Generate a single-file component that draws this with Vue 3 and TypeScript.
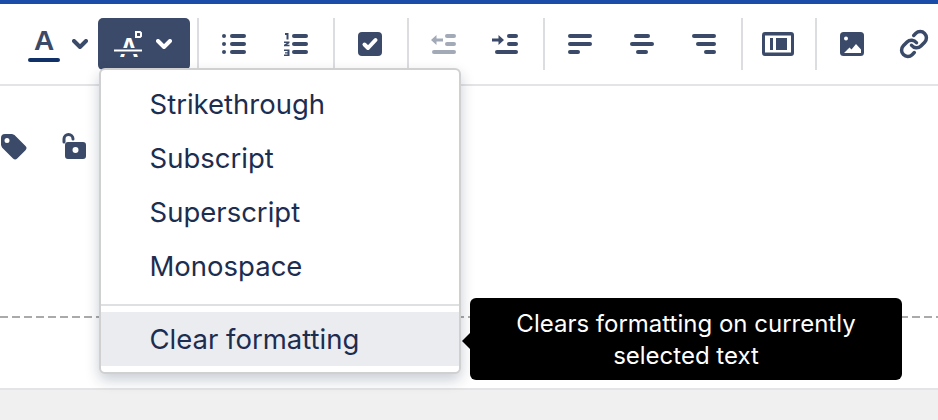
<script setup lang="ts">
const menuItems = ["Strikethrough", "Subscript", "Superscript", "Monospace"];
</script>

<template>
  <div class="page">
    <div class="top-bar" />
    <div class="toolbar">
      <button class="btn btn-color">
        <span class="letter-wrap">
          <span class="letter">A</span>
          <span class="letter-line" />
        </span>
        <svg class="chevron" width="16" height="10" viewBox="0 0 16 10">
          <path d="M2 2l6 6 6-6" />
        </svg>
      </button>
      <button class="btn btn-active">
        <svg class="more-icon" width="28" height="32" viewBox="0 0 28 32">
          <text x="15" y="29" text-anchor="middle" class="more-a">A</text>
          <rect x="0" y="20" width="28" height="6" class="more-band" />
          <rect x="0" y="21.500" width="28" height="2" class="more-line" />
          <path d="M22 4h4l1 1v3l-1 1h-4z" class="more-box" />
        </svg>
        <svg class="chevron" width="16" height="10" viewBox="0 0 16 10">
          <path d="M2 2l6 6 6-6" />
        </svg>
      </button>

      <span class="sep" />

      <button class="btn">
        <svg width="32" height="32" viewBox="0 0 32 32">
          <circle cx="6" cy="8" r="2" />
          <circle cx="6" cy="16" r="2" />
          <circle cx="6" cy="24" r="2" />
          <rect x="12" y="6" width="16" height="4" rx="2" />
          <rect x="12" y="14" width="16" height="4" rx="2" />
          <rect x="12" y="22" width="16" height="4" rx="2" />
        </svg>
      </button>
      <button class="btn">
        <svg width="32" height="32" viewBox="0 0 32 32">
          <path d="M5 5h3.500v6.500h-2V7H5z" />
          <path d="M4 13.500h5.500v1.500l-2.500 1.700h2.500v1.500H4v-1.500l2.800-1.700H4z" />
          <path d="M4 21.500h5.500V28H4v-1.500h3.500v-1H5v-1.300h2.500V23H4z" />
          <rect x="12" y="6" width="16" height="4" rx="2" />
          <rect x="12" y="14" width="16" height="4" rx="2" />
          <rect x="12" y="22" width="16" height="4" rx="2" />
        </svg>
      </button>

      <span class="sep" />

      <button class="btn">
        <svg width="32" height="32" viewBox="0 0 32 32">
          <rect x="4" y="4" width="24" height="24" rx="4" />
          <path d="M10.500 16.500l3.500 3.500 7.500-8" class="check-mark" />
        </svg>
      </button>

      <span class="sep" />

      <button class="btn btn-disabled">
        <svg width="32" height="32" viewBox="0 0 32 32">
          <path d="M3 12l5.500-5v3.500H15v3H8.500V17z" />
          <rect x="17" y="6" width="11" height="4" rx="2" />
          <rect x="17" y="14" width="11" height="4" rx="2" />
          <rect x="4" y="22" width="24" height="4" rx="2" />
        </svg>
      </button>
      <button class="btn">
        <svg width="32" height="32" viewBox="0 0 32 32">
          <path d="M14 12L8.500 7v3.500H2v3h6.500V17z" />
          <rect x="17" y="6" width="11" height="4" rx="2" />
          <rect x="17" y="14" width="11" height="4" rx="2" />
          <rect x="5" y="22" width="23" height="4" rx="2" />
        </svg>
      </button>

      <span class="sep" />

      <button class="btn">
        <svg width="32" height="32" viewBox="0 0 32 32">
          <rect x="4" y="6" width="24" height="4" rx="2" />
          <rect x="4" y="14" width="24" height="4" rx="2" />
          <rect x="4" y="22" width="12" height="4" rx="2" />
        </svg>
      </button>
      <button class="btn">
        <svg width="32" height="32" viewBox="0 0 32 32">
          <rect x="8" y="6" width="16" height="4" rx="2" />
          <rect x="4" y="14" width="24" height="4" rx="2" />
          <rect x="10" y="22" width="12" height="4" rx="2" />
        </svg>
      </button>
      <button class="btn">
        <svg width="32" height="32" viewBox="0 0 32 32">
          <rect x="4" y="6" width="24" height="4" rx="2" />
          <rect x="8" y="14" width="20" height="4" rx="2" />
          <rect x="16" y="22" width="12" height="4" rx="2" />
        </svg>
      </button>

      <span class="sep" />

      <button class="btn">
        <svg width="32" height="32" viewBox="0 0 32 32">
          <path fill-rule="evenodd" d="M3 4h26a3 3 0 0 1 3 3v18a3 3 0 0 1-3 3H3a3 3 0 0 1-3-3V7a3 3 0 0 1 3-3zm0 3.500v17h26v-17z" />
          <rect x="8" y="10" width="3" height="12" />
          <rect x="14" y="10" width="11" height="12" />
        </svg>
      </button>

      <span class="sep" />

      <button class="btn">
        <svg width="32" height="32" viewBox="0 0 32 32">
          <rect x="4" y="4" width="24" height="24" rx="3.500" />
          <circle cx="10" cy="10.500" r="2" class="white" />
          <path d="M8 25l5.500-5.500 2 2L20 16l5 5.500V25z" class="white" />
        </svg>
      </button>
      <button class="btn">
        <svg class="link-icon" width="30" height="30" viewBox="0 0 24 24">
          <path d="M10 13a5 5 0 0 0 7.540.540l3-3a5 5 0 0 0-7.070-7.070l-1.720 1.710" />
          <path d="M14 11a5 5 0 0 0-7.540-.540l-3 3a5 5 0 0 0 7.070 7.070l1.710-1.710" />
        </svg>
      </button>
    </div>

    <div class="content">
      <div class="meta">
        <svg width="26" height="26" viewBox="0 0 26 26">
          <path fill-rule="evenodd" d="M4 0h7l2.500 1 11 11a3 3 0 0 1 0 4.200l-8.300 8.300a3 3 0 0 1-4.200 0L1 13.500 0 11V4a4 4 0 0 1 4-4zm2 4a2.500 2.500 0 1 0 0 5 2.500 2.500 0 0 0 0-5z" />
        </svg>
        <svg width="26" height="28" viewBox="0 0 26 28">
          <path d="M2 10V7a4.500 4.500 0 0 1 9 0" class="shackle" />
          <path fill-rule="evenodd" d="M6 10h15a3 3 0 0 1 3 3v11a3 3 0 0 1-3 3H6a3 3 0 0 1-3-3V13a3 3 0 0 1 3-3zm7.500 5a3 3 0 1 0 0 6 3 3 0 0 0 0-6z" />
        </svg>
      </div>
      <div class="dashed" />
    </div>
    <div class="footer" />

    <div class="menu">
      <div v-for="item in menuItems" :key="item" class="menu-item">{{ item }}</div>
      <div class="menu-sep" />
      <div class="menu-item menu-item-hover">Clear formatting</div>
    </div>

    <div class="tooltip">
      <span class="tooltip-arrow" />
      Clears formatting on currently selected text
    </div>
  </div>
</template>

<style>
html,
body {
  margin: 0;
  overflow: hidden;
  background: #fff;
}
</style>

<style scoped>
.page {
  position: relative;
  width: 938px;
  height: 420px;
  display: flex;
  flex-direction: column;
  overflow: hidden;
  font-family: Inter, "Liberation Sans", sans-serif;
  color: #1d2d50;
}

.top-bar {
  height: 4px;
  background: #1b4ca8;
  flex: none;
}

.toolbar {
  flex: none;
  height: 66px;
  padding: 14px 0 0 16px;
  display: flex;
  align-items: flex-start;
  border-bottom: 2px solid #e4e4e6;
}

.btn {
  flex: none;
  width: 62px;
  height: 52px;
  padding: 0;
  border: none;
  border-radius: 5px;
  background: none;
  display: flex;
  align-items: center;
  justify-content: center;
  color: #3a4a68;
  fill: #3a4a68;
}

.btn-disabled {
  fill: #a2a9b7;
}

.btn-color {
  width: 82px;
  justify-content: flex-start;
  padding-left: 12px;
  gap: 12px;
}

.btn-active {
  width: 92px;
  margin-right: 1px;
  justify-content: flex-start;
  padding-left: 16px;
  gap: 14px;
  background: #3a4a68;
  color: #fff;
}

.chevron {
  fill: none;
  stroke: currentColor;
  stroke-width: 4;
  stroke-linecap: round;
  stroke-linejoin: round;
}

.letter-wrap {
  width: 32px;
  display: flex;
  flex-direction: column;
  align-items: center;
  height: 32px;
  position: relative;
}

.letter {
  font-size: 28px;
  font-weight: 600;
  line-height: 28px;
  margin-top: -1px;
}

.letter-line {
  position: absolute;
  left: 0;
  right: 0;
  bottom: -2px;
  height: 4px;
  border-radius: 2px;
  background: #0f3167;
}

.more-icon {
  overflow: visible;
}

.more-a {
  fill: #fff;
  font-size: 26px;
  font-weight: 600;
  font-family: Inter, "Liberation Sans", sans-serif;
}

.more-band {
  fill: #3a4a68;
}

.more-line {
  fill: #fff;
}

.more-box {
  fill: none;
  stroke: #fff;
  stroke-width: 2;
}

.check-mark {
  fill: none;
  stroke: #fff;
  stroke-width: 4;
  stroke-linecap: round;
  stroke-linejoin: round;
}

.white {
  fill: #fff;
}

.link-icon {
  fill: none;
  stroke: #3a4a68;
  stroke-width: 2.800;
  stroke-linecap: round;
  stroke-linejoin: round;
}

.sep {
  flex: none;
  width: 1.500px;
  height: 52px;
  margin: 0 4.500px 0 6px;
  background: #dcdde1;
}

.content {
  flex: 1;
  display: flex;
  flex-direction: column;
}

.meta {
  display: flex;
  align-items: flex-end;
  gap: 35px;
  padding: 46px 0 0 1px;
  height: 28px;
  fill: #3a4a68;
}

.shackle {
  fill: none;
  stroke: #3a4a68;
  stroke-width: 3;
  stroke-linecap: round;
}

.dashed {
  margin-top: 156px;
  height: 2px;
  background: repeating-linear-gradient(90deg, #aaa 0 8px, transparent 8px 12px);
}

.footer {
  flex: none;
  height: 30px;
  background: #f0f0f0;
  border-top: 2px solid #e4e4e6;
}

.menu {
  position: absolute;
  left: 99px;
  top: 68px;
  width: 358px;
  padding: 7px 0 6px;
  background: #fff;
  border: 2px solid #d0d0d0;
  border-radius: 6px;
  box-shadow: 0 6px 14px rgba(9, 30, 66, 0.22);
}

.menu-item {
  height: 54px;
  line-height: 54px;
  padding-left: 48.500px;
  font-size: 27.500px;
}

.menu-item-hover {
  background: #ebecf0;
}

.menu-sep {
  height: 2px;
  margin: 11px 0 6px;
  background: #dfe0e2;
}

.tooltip {
  position: absolute;
  left: 470px;
  top: 298px;
  width: 432px;
  height: 82px;
  box-sizing: border-box;
  padding: 10px 40px;
  border-radius: 6px;
  background: #000;
  color: #fff;
  font-size: 24px;
  line-height: 32px;
  text-align: center;
}

.tooltip-arrow {
  position: absolute;
  left: -8px;
  top: 35px;
  width: 0;
  height: 0;
  border-top: 8px solid transparent;
  border-bottom: 8px solid transparent;
  border-right: 8px solid #000;
}
</style>
